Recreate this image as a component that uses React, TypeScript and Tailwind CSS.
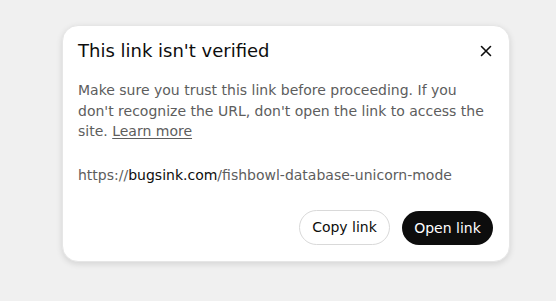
import React from "react";

export default function App() {
  return (
    <div
      className="w-[556px] h-[301px] bg-[#f0f0f0] pl-[62px] pt-[25px]"
      style={{ fontFamily: '"DejaVu Sans", sans-serif' }}
    >
      <div className="w-[448px] h-[237px] bg-white rounded-[16px] shadow-[0_2px_6px_rgba(0,0,0,0.12)] border border-[#e6e6e6] flex flex-col px-[15px] pb-[16px]">
        <div className="flex items-center justify-between h-[50px]">
          <h2 className="text-[18px] text-[#0d0d0d] leading-[24px]">This link isn't verified</h2>
          <button className="w-[20px] h-[20px] flex items-center justify-center mr-[-2px]">
            <svg width="12" height="12" viewBox="0 0 12 12" fill="none" stroke="#0d0d0d" strokeWidth="1.6" strokeLinecap="round">
              <path d="M1.5 1.5 L10.5 10.5 M10.5 1.5 L1.5 10.5" />
            </svg>
          </button>
        </div>
        <p className="mt-[4px] text-[14px] leading-[20.5px] text-[#5d5d5d]">
          Make sure you trust this link before proceeding. If you don't recognize the URL, don't open the link to access the site.{" "}
          <a className="underline underline-offset-2 decoration-1">Learn more</a>
        </p>
        <p className="mt-[23px] text-[14px] leading-[20px] text-[#5d5d5d]">
          https://<span className="text-[#0d0d0d]">bugsink.com</span>/fishbowl-database-unicorn-mode
        </p>
        <div className="mt-auto flex justify-end gap-[12px] pr-[1px]">
          <button className="h-[35px] w-[91px] rounded-full border border-[#d9d9d9] bg-white text-[14px] text-[#0d0d0d] flex items-center justify-center">
            Copy link
          </button>
          <button className="h-[34px] w-[91px] mt-[1px] rounded-full bg-[#0d0d0d] text-[14px] text-white flex items-center justify-center">
            Open link
          </button>
        </div>
      </div>
    </div>
  );
}
